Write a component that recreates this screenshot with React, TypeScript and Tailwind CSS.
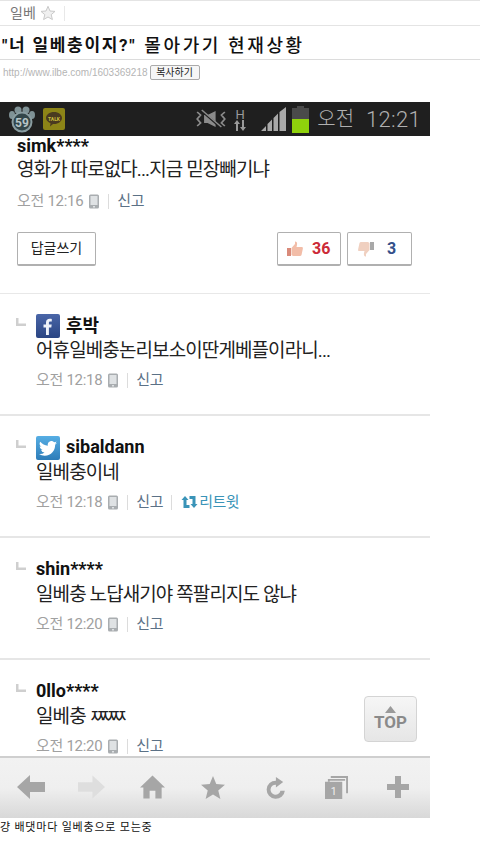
const font = "font-['Roboto','Noto_Sans_CJK_KR',sans-serif]";

function Phone() {
  return (
    <svg width="12" height="15" viewBox="0 0 12 15" className="shrink-0">
      <rect x="1" y="0.5" width="10" height="14" rx="1.5" fill="#a9adb0" />
      <rect x="2.5" y="2" width="7" height="9" fill="#dfe2e4" />
      <rect x="5" y="12" width="2" height="1.5" fill="#dfe2e4" />
    </svg>
  );
}

function Meta({ time, retweet }: { time: string; retweet?: boolean }) {
  return (
    <div className="flex items-center h-[20px] text-[15px] text-[#a0a0a0] tracking-[-0.3px]">
      <span>{time}</span>
      <span className="ml-[5px]"><Phone /></span>
      <span className="w-px h-[15px] bg-[#dcdcdc] ml-[8px] mr-[8px]" />
      <span className="text-[#5b7186]">신고</span>
      {retweet && (
        <>
          <span className="w-px h-[15px] bg-[#dcdcdc] ml-[8px] mr-[9px]" />
          <svg width="17" height="14" viewBox="0 0 16 14" className="shrink-0">
            <path d="M3.500 1L7 5H5v5h3v3H2V5H0z M12.500 13L9 9h2V4H8V1h6v8h2z" fill="#3a94b8" />
          </svg>
          <span className="text-[#3a94b8] ml-[1px] tracking-[-0.6px]">리트윗</span>
        </>
      )}
    </div>
  );
}

function Social({ kind }: { kind: "f" | "t" }) {
  if (kind === "f") {
    return (
      <span className="w-[24px] h-[24px] rounded-[2px] bg-gradient-to-b from-[#4a66a8] to-[#2a4583] flex items-center justify-center mr-[6px] shrink-0">
        <svg width="12" height="17" viewBox="0 0 12 17">
          <path d="M4 17V9.500H1.500V6.500H4V4.500C4 2 5.500 0.800 7.700 0.800c1 0 1.800.1 2.100.1v2.600H8.300C7.100 3.500 6.900 4.100 6.900 4.900V6.500h2.800l-.4 3H6.900V17z" fill="#eef2fa" />
        </svg>
      </span>
    );
  }
  return (
    <span className="w-[24px] h-[24px] rounded-[2px] bg-gradient-to-b from-[#56aee4] to-[#2d7cb8] flex items-center justify-center mr-[6px] shrink-0">
      <svg width="18" height="15" viewBox="0 0 24 20">
        <path d="M24 2.400a9.800 9.800 0 0 1-2.800.8A5 5 0 0 0 23.300.5a9.800 9.800 0 0 1-3.100 1.200 4.900 4.900 0 0 0-8.400 4.500A14 14 0 0 1 1.700 1a4.900 4.900 0 0 0 1.500 6.600 4.900 4.900 0 0 1-2.200-.6c0 2.400 1.700 4.400 4 4.900a4.900 4.900 0 0 1-2.200.1 4.900 4.900 0 0 0 4.600 3.400A9.900 9.900 0 0 1 0 17.400 14 14 0 0 0 7.500 19.600c9.100 0 14-7.500 14-14v-.6A10 10 0 0 0 24 2.400z" fill="#ffffff" />
      </svg>
    </span>
  );
}

function Reply({
  name,
  text,
  time,
  social,
  retweet,
  h,
  latin,
  border = true,
  children,
}: {
  name: string;
  text?: string;
  time: string;
  social?: "f" | "t";
  retweet?: boolean;
  h: string;
  latin?: boolean;
  border?: boolean;
  children?: React.ReactNode;
}) {
  return (
    <div className={`${h} pl-[16px] pt-[20px] flex shrink-0 ${border ? "border-b-2 border-[#e6e6e6]" : ""}`}>
      <svg width="10" height="8" viewBox="0 0 10 8" className="mt-[4px] mr-[10px] shrink-0">
        <path d="M0 0h2.500v5.500H10V8H0z" fill="#cfcfcf" />
      </svg>
      <div>
        <div className="flex items-center h-[24px] text-[18px] font-bold text-[#111] leading-none">
          {social && <Social kind={social} />}
          <span className={latin ? "pb-[3px]" : ""}>{name}</span>
        </div>
        <div className="h-[25px] text-[19px] leading-[26px] text-[#222] tracking-[-0.9px] whitespace-nowrap">{text}{children}</div>
        <div className="mt-[7px]"><Meta time={time} retweet={retweet} /></div>
      </div>
    </div>
  );
}

function StatusBar() {
  return (
    <div className="h-[34px] shrink-0 bg-[#1f1f1f] flex items-center pl-[8px] pr-[9px] text-[#b4b4b4]">
      <svg width="28" height="27" viewBox="0 0 28 27" className="shrink-0">
        <g fill="#7f9296">
          <ellipse cx="4" cy="9" rx="3" ry="4" />
          <ellipse cx="10" cy="4" rx="3.500" ry="3.500" />
          <ellipse cx="18" cy="4" rx="3.500" ry="3.500" />
          <ellipse cx="24" cy="9" rx="3" ry="4" />
        </g>
        <circle cx="14" cy="16" r="9.500" fill="#33464a" stroke="#8a9da1" strokeWidth="2" />
        <text x="14" y="21" textAnchor="middle" fontSize="12" fontWeight="700" fill="#b7c4c6" fontFamily="Roboto, sans-serif">59</text>
      </svg>
      <span className="ml-[7px] w-[22px] h-[22px] bg-[#8c8417] rounded-[2px] flex items-center justify-center shrink-0">
        <svg width="18" height="16" viewBox="0 0 18 16">
          <path d="M9 1c4.500 0 8 2.700 8 6s-3.500 6-8 6l-1 0-3 2.500.5-3.200C3 11.200 1 9.300 1 7c0-3.300 3.500-6 8-6z" fill="#4a3a20" />
          <text x="9" y="9.500" textAnchor="middle" fontSize="5" fontWeight="700" fill="#c9be3c" fontFamily="Roboto, sans-serif">TALK</text>
        </svg>
      </span>
      <span className="flex-1" />
      <svg width="30" height="20" viewBox="0 0 26 20" className="shrink-0" preserveAspectRatio="none">
        <path d="M1 3l3 3-3 4 3 4-3 3M25 3l-3 3 3 4-3 4 3 3" stroke="#8b8b8b" strokeWidth="1.500" fill="none" />
        <path d="M7 6h3l7-4v16l-7-4H7z" fill="#8b8b8b" />
        <path d="M4 1l18 18" stroke="#1f1f1f" strokeWidth="2" />
        <path d="M5 1l17 17" stroke="#8b8b8b" strokeWidth="1.200" />
      </svg>
      <div className="ml-[7px] w-[14px] flex flex-col items-center leading-none">
        <span className="text-[13px] text-[#9a9a9a] h-[12px] font-['Roboto',sans-serif]">H</span>
        <svg width="12" height="11" viewBox="0 0 12 11">
          <path d="M3 0l3 4H4v7H2V4H0zM9 11L6 7h2V0h2v7h2z" fill="#9a9a9a" />
        </svg>
      </div>
      <svg width="25" height="24" viewBox="0 0 25 24" className="ml-[14px] shrink-0">
        <path d="M0 24l5-5v5zM6.500 24v-7l4.500-4.500V24zM12.500 24V11L17 6.500V24zM18.500 24V5L25 0v24z" fill="#a9a9a9" />
      </svg>
      <div className="ml-[6px] w-[17px] h-[27px] flex flex-col items-center shrink-0">
        <div className="w-[7px] h-[2px] bg-[#4a4a4a]" />
        <div className="w-[17px] h-[11px] bg-[#4a4a4a]" />
        <div className="w-[17px] h-[14px] bg-[#8fd10c]" />
      </div>
      <span className="ml-[8px] text-[20px] text-[#b0b0b0] font-light font-['Roboto','Noto_Sans_CJK_KR',sans-serif] whitespace-nowrap">오전</span>
      <span className="ml-[12px] text-[22px] tracking-[0.3px] text-[#b0b0b0] font-light font-['Roboto',sans-serif] whitespace-nowrap">12:21</span>
    </div>
  );
}

function BottomNav() {
  return (
    <div className="h-[62px] shrink-0 border-t-2 border-[#cfcfcf] bg-gradient-to-b from-[#f2f2f2] via-[#efefef] to-[#d8d8d8] flex items-center pl-[17px] pb-[2px]">
      <svg width="28" height="24" viewBox="0 0 28 24"><path d="M0 12L13 0v7h15v10H13v7z" fill="#a6a6a6" /></svg>
      <svg width="27" height="24" viewBox="0 0 28 24" className="ml-[33px]"><path d="M28 12L15 0v7H0v10h15v7z" fill="#dedede" /></svg>
      <svg width="25" height="24" viewBox="0 0 26 24" className="ml-[35px]"><path d="M13 0L26 12.500h-3.500V24H16v-8h-6v8H3.500V12.500H0z" fill="#a6a6a6" /></svg>
      <svg width="24" height="23" viewBox="0 0 25 24" className="ml-[36px]"><path d="M12.500 0l3.400 8.400 9.100.7-7 5.900 2.200 9-7.700-4.800L4.800 24l2.200-9-7-5.900 9.100-.7z" fill="#a6a6a6" /></svg>
      <svg width="20" height="24" viewBox="0 0 22 24" className="ml-[40px]"><path d="M12 1l8 5.500-8 6V9.500a5.500 5.500 0 1 0 5 6.500h4.800A10 10 0 1 1 12 5z" fill="#a6a6a6" /></svg>
      <svg width="23" height="23" viewBox="0 0 24 24" className="ml-[40px]">
        <path d="M6 0h18v18h-2V2H6z" fill="#a6a6a6" />
        <path d="M3 3h18v2H5v1H3z" fill="#a6a6a6" />
        <rect x="0" y="6" width="18" height="18" fill="#a6a6a6" />
        <text x="9" y="20" textAnchor="middle" fontSize="11" fontFamily="Roboto, sans-serif" fill="#f0f0f0">1</text>
      </svg>
      <svg width="22" height="22" viewBox="0 0 22 22" className="ml-[39px]"><path d="M8 0h6v8h8v6h-8v8H8v-8H0V8h8z" fill="#a6a6a6" /></svg>
    </div>
  );
}

export default function App() {
  return (
    <div className={`w-[480px] h-[846px] overflow-hidden bg-white ${font} relative`}>
      <div className="h-[26px] border-y border-[#e4e4e4] flex items-center pl-[10px] text-[14px] text-[#777]">
        <span>일베</span>
        <svg width="16" height="16" viewBox="0 0 24 24" className="ml-[4px]">
          <path d="M12 2l3 7 7.500.6-5.700 4.900 1.800 7.300L12 18l-6.600 3.800 1.800-7.300L1.500 9.600 9 9z" fill="#f0f0f0" stroke="#c9c9c9" strokeWidth="1.500" />
        </svg>
        <span className="w-px h-[15px] bg-[#e8e8e8] ml-[8px]" />
      </div>
      <div className="h-[34px] border-b border-[#dcdcdc] pl-[2px] pt-[6px] flex items-center text-[17px] text-[#111] whitespace-nowrap">
        <span className="font-bold tracking-[1.7px]">"너 일베충이지?"</span>
        <span className="ml-[8px] font-medium text-[18px] tracking-[2.6px]">몰아가기 현재상황</span>
      </div>
      <div className="h-[24px] pl-[3px] pt-[1px] flex items-center">
        <span className="text-[10px] text-[#b5b5b5] font-['Liberation_Sans',sans-serif] whitespace-nowrap">http://www.ilbe.com/1603369218</span>
        <span className="ml-[2px] h-[15px] w-[50px] border border-[#aaa] rounded-[2px] bg-[#f6f6f6] text-[10px] leading-[13px] text-center text-[#222]">복사하기</span>
      </div>
      <div className="h-[18px]" />
      <div className="w-[430px] h-[716px] flex flex-col overflow-hidden relative">
        <StatusBar />
        <div className="flex-1 min-h-0 overflow-hidden">
          <div className="h-[158px] pl-[17px] pr-[18px] border-b border-[#e8e8e8]">
            <div className="h-[20px] text-[18px] font-bold text-[#111] leading-[20px]">simk****</div>
            <div className="h-[26px] mt-[1px] text-[19px] leading-[26px] text-[#222] tracking-[-0.9px] whitespace-nowrap">영화가 따로없다...지금 믿장빼기냐</div>
            <div className="mt-[8px]"><Meta time="오전 12:16" /></div>
            <div className="mt-[21px] flex items-center">
              <span className="w-[79px] h-[34px] border border-[#b0b0b0] border-b-2 rounded-[2px] flex items-center justify-center text-[14px] text-[#222]">답글쓰기</span>
              <span className="flex-1" />
              <span className="w-[64px] h-[34px] border border-[#b0b0b0] border-b-2 rounded-[2px] flex items-center pl-[9px] text-[#cc2a36] font-bold text-[16px]">
                <svg width="16" height="16" viewBox="0 0 16 16">
                  <path d="M0 7h4v8H0z" fill="#d98a7a" />
                  <path d="M4.500 7L8 3V0.500c1.500 0 2.500 1 2 3.500L9.500 6H15c1 0 1 1 .8 2l-1.300 6c-.2.700-.7 1-1.500 1H6l-1.500-1z" fill="#f2bda8" />
                </svg>
                <span className="ml-[9px]">36</span>
              </span>
              <span className="w-[65px] h-[34px] ml-[6px] border border-[#b0b0b0] border-b-2 rounded-[2px] flex items-center pl-[10px] text-[#34508a] font-bold text-[16px]">
                <svg width="16" height="16" viewBox="0 0 16 16">
                  <path d="M12 1h4v8h-4z" fill="#a8a8a8" />
                  <path d="M11.500 9L8 13v2.500c-1.500 0-2.500-1-2-3.500L6.500 10H1C0 10 0 9 .2 8l1.300-6C1.700 1.300 2.200 1 3 1h7l1.500 1z" fill="#f0d0c0" />
                </svg>
                <span className="ml-[13px]">3</span>
              </span>
            </div>
          </div>
          <Reply h="h-[122px]" social="f" name="후박" text="어휴일베충논리보소이딴게베플이라니..." time="오전 12:18" />
          <Reply h="h-[122px]" social="t" latin name="sibaldann" text="일베충이네" time="오전 12:18" retweet />
          <Reply h="h-[122px]" latin name="shin****" text="일베충 노답새기야 쪽팔리지도 않냐" time="오전 12:20" />
          <Reply h="h-[122px]" latin name="0llo****" time="오전 12:20" border={false}>
            일베충 <span className="text-[18px] tracking-[-6px]">ㅉㅉㅉ</span>
          </Reply>
        </div>
        <BottomNav />
        <div className="absolute left-[364px] top-[594px] w-[53px] h-[46px] rounded-[4px] border border-[#d4d4d4] bg-gradient-to-b from-[#f6f6f6] to-[#e6e6e6] flex flex-col items-center pt-[9px]">
          <svg width="11" height="7" viewBox="0 0 11 7"><path d="M5.500 0L11 7H0z" fill="#9a9a9a" /></svg>
          <span className="text-[17px] font-bold leading-[17px] mt-[1px] text-[#8a8a8a]">TOP</span>
        </div>
      </div>
      <div className="h-[20px] flex items-center text-[11px] text-[#111] tracking-[0.8px] whitespace-nowrap">걍 배댓마다 일베충으로 모는중</div>
    </div>
  );
}
